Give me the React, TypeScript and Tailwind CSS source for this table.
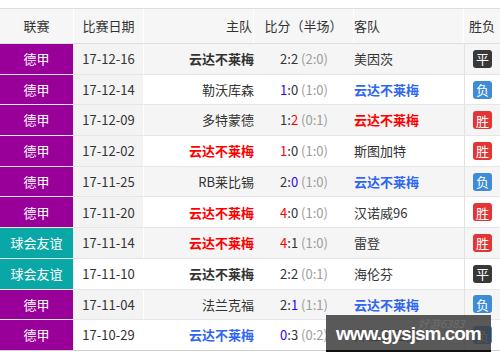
import React from "react";

type Seg = { t: string; c?: string };
type Row = {
  league: string;
  teal?: boolean;
  date: string;
  home: string;
  homeCls: string;
  score: Seg[];
  half: string;
  away: string;
  awayCls: string;
  res: "胜" | "负" | "平";
  dateWhite?: boolean;
};

const N = "text-[#333]";
const WB = "text-[#333] font-bold";
const RED = "text-[#ff0000] font-bold";
const BLUE = "text-[#2f66f2] font-bold";

const rows: Row[] = [
  { league: "德甲", date: "17-12-16", home: "云达不莱梅", homeCls: WB, score: [{ t: "2:2" }], half: "(2:0)", away: "美因茨", awayCls: N, res: "平" },
  { league: "德甲", date: "17-12-14", home: "勒沃库森", homeCls: N, score: [{ t: "1", c: "text-[#3300ff]" }, { t: ":0" }], half: "(1:0)", away: "云达不莱梅", awayCls: BLUE, res: "负" },
  { league: "德甲", date: "17-12-09", home: "多特蒙德", homeCls: N, score: [{ t: "1:" }, { t: "2", c: "text-[#ff0000]" }], half: "(0:1)", away: "云达不莱梅", awayCls: RED, res: "胜" },
  { league: "德甲", date: "17-12-02", home: "云达不莱梅", homeCls: RED, score: [{ t: "1", c: "text-[#ff0000]" }, { t: ":0" }], half: "(1:0)", away: "斯图加特", awayCls: N, res: "胜" },
  { league: "德甲", date: "17-11-25", home: "RB莱比锡", homeCls: N, score: [{ t: "2:" }, { t: "0", c: "text-[#3300ff]" }], half: "(1:0)", away: "云达不莱梅", awayCls: BLUE, res: "负" },
  { league: "德甲", date: "17-11-20", home: "云达不莱梅", homeCls: RED, score: [{ t: "4", c: "text-[#ff0000]" }, { t: ":0" }], half: "(1:0)", away: "汉诺威96", awayCls: N, res: "胜" },
  { league: "球会友谊", teal: true, date: "17-11-14", home: "云达不莱梅", homeCls: RED, score: [{ t: "4", c: "text-[#ff0000]" }, { t: ":1" }], half: "(1:0)", away: "雷登", awayCls: N, res: "胜" },
  { league: "球会友谊", teal: true, date: "17-11-10", home: "云达不莱梅", homeCls: WB, score: [{ t: "2:2" }], half: "(0:1)", away: "海伦芬", awayCls: N, res: "平", dateWhite: true },
  { league: "德甲", date: "17-11-04", home: "法兰克福", homeCls: N, score: [{ t: "2:" }, { t: "1", c: "text-[#3300ff]" }], half: "(1:1)", away: "云达不莱梅", awayCls: BLUE, res: "负" },
  { league: "德甲", date: "17-10-29", home: "云达不莱梅", homeCls: BLUE, score: [{ t: "0", c: "text-[#3300ff]" }, { t: ":3" }], half: "(0:2)", away: "拜仁慕尼黑", awayCls: N, res: "负", dateWhite: true },
];

function Badge({ r }: { r: Row["res"] }) {
  const bg = r === "胜" ? "bg-[#e33535]" : r === "负" ? "bg-[#3e8bd8]" : "bg-[#383838]";
  return (
    <span className={`inline-flex items-center justify-center w-[19px] h-[18px] rounded-[3px] text-white text-[13px] leading-none ${bg}`}>
      {r}
    </span>
  );
}

export default function App() {
  return (
    <div
      className="relative w-[500px] h-[362px] bg-white overflow-hidden pt-[8px] text-[13px] text-[#333]"
      style={{ fontFamily: '"Noto Sans CJK SC", "Noto Sans", sans-serif' }}
    >
      {/* header */}
      <div className="flex h-[36px] border-t border-b border-[#dedede] bg-[#f6f6f6]">
        <div className="w-[74px] flex items-center justify-center border-r border-white">联赛</div>
        <div className="w-[70px] flex items-center justify-center border-r border-white">比赛日期</div>
        <div className="w-[110px] flex items-center justify-end pr-[1px] border-r border-white">主队</div>
        <div className="w-[100px] flex items-center justify-center border-r border-white">比分（半场）</div>
        <div className="w-[110px] flex items-center justify-start border-r border-white">客队</div>
        <div className="w-[36px] flex items-center justify-center">胜负</div>
      </div>
      {/* body */}
      <div className="flex flex-col">
        {rows.map((r, i) => {
          const odd = i % 2 === 0;
          const rowBg = odd ? "bg-[#f5f5f5]" : "bg-white";
          const dateBg = r.dateWhite ? "bg-white" : "bg-[#f3f3f3]";
          const last = i === rows.length - 1;
          return (
            <div
              key={i}
              className={`flex h-[30.7px] border-b ${last ? "border-[#cfcfcf]" : "border-[#e4e6ea]"} ${rowBg}`}
            >
              <div
                className={`w-[74px] flex items-center justify-center border-r border-[#f0f0f0] text-white ${
                  r.teal ? "bg-[#0aa7a7]" : "bg-[#990099]"
                }`}
              >
                {r.league}
              </div>
              <div className={`w-[70px] flex items-center justify-center border-r border-white ${odd ? "bg-[#f3f3f3]" : dateBg}`}>
                {r.date}
              </div>
              <div className={`w-[110px] flex items-center justify-end pr-[0px] ${r.homeCls}`}>{r.home}</div>
              <div className="w-[100px] flex items-center justify-center whitespace-pre">
                <span>
                  {r.score.map((s, k) => (
                    <span key={k} className={s.c ?? "text-[#333]"}>
                      {s.t}
                    </span>
                  ))}
                </span>
                <span className="text-[#9c9c9c]"> {r.half}</span>
              </div>
              <div className={`w-[110px] flex items-center justify-start ${r.awayCls}`}>{r.away}</div>
              <div className="w-[36px] flex items-center justify-center border-l border-[#e2e2e2]">
                <Badge r={r.res} />
              </div>
            </div>
          );
        })}
      </div>

      {/* watermark */}
      <div className="absolute left-[326px] top-[315px] w-[165px] h-[37px] bg-[rgba(62,62,62,0.86)] border-b-2 border-[#111] overflow-hidden">
        <div
          className="absolute left-[92px] top-[3px] text-[11px] leading-none text-[#6f6f6f] italic"
          style={{ fontFamily: '"Noto Sans CJK SC", sans-serif' }}
        >
          好游6383
        </div>
        <div
          className="absolute left-[10px] top-[9px] text-white font-bold text-[19px] leading-none tracking-[-1px]"
          style={{ fontFamily: '"Liberation Sans", Arial, sans-serif' }}
        >
          www.gysjsm.com
        </div>
      </div>
    </div>
  );
}
